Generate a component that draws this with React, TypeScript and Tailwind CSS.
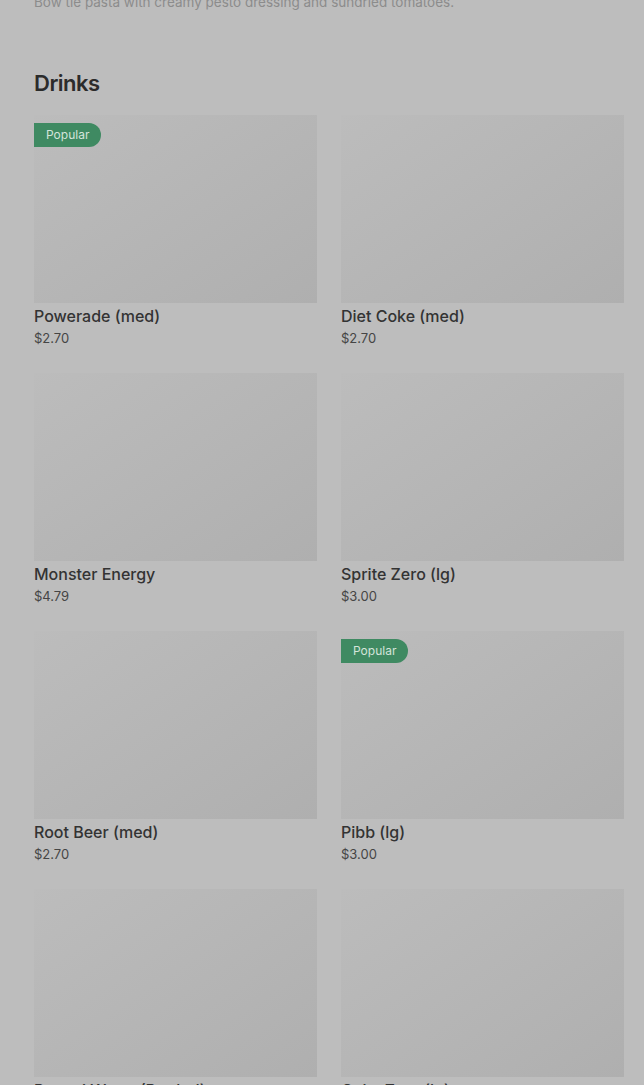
import React from "react";

type Item = { name: string; price: string; popular?: boolean };

const items: Item[] = [
  { name: "Powerade (med)", price: "$2.70", popular: true },
  { name: "Diet Coke (med)", price: "$2.70" },
  { name: "Monster Energy", price: "$4.79" },
  { name: "Sprite Zero (lg)", price: "$3.00" },
  { name: "Root Beer (med)", price: "$2.70" },
  { name: "Pibb (lg)", price: "$3.00", popular: true },
  { name: "Dasani Water (Bottled)", price: "$2.50" },
  { name: "Coke Zero (lg)", price: "$3.00" },
];

function Card({ item }: { item: Item }) {
  return (
    <div className="flex flex-col mb-[24px]">
      <div className="relative h-[188px] w-full bg-gradient-to-br from-[#bcbcbc] to-[#afafaf]">
        {item.popular && (
          <div className="absolute left-0 top-[8px] h-[24px] flex items-center pl-[12px] pr-[12px] rounded-r-full bg-[#3f8a62] text-[12px] text-[#d4e4da]">
            Popular
          </div>
        )}
      </div>
      <div className="mt-[1px] text-[16px] leading-[24px] font-medium text-[#333333]">
        {item.name}
      </div>
      <div className="mb-[1px] text-[13px] leading-[20px] text-[#454545]">{item.price}</div>
    </div>
  );
}

export default function App() {
  return (
    <div
      className="min-h-[1085px] h-[1085px] overflow-hidden bg-[#bdbdbd] pl-[34px] pr-[20px]"
      style={{ fontFamily: "Inter, 'Noto Sans', sans-serif" }}
    >
      <p className="-mt-[8px] text-[13.5px] leading-[20px] text-[#8c8c8c]">
        Bow tie pasta with creamy pesto dressing and sundried tomatoes.
      </p>
      <h2 className="mt-[55px] text-[22px] leading-[32px] font-semibold tracking-[-0.5px] text-[#2b2b2b]">
        Drinks
      </h2>
      <div className="mt-[16px] grid grid-cols-2 gap-x-[24px]">
        {items.map((it) => (
          <Card key={it.name} item={it} />
        ))}
      </div>
    </div>
  );
}
